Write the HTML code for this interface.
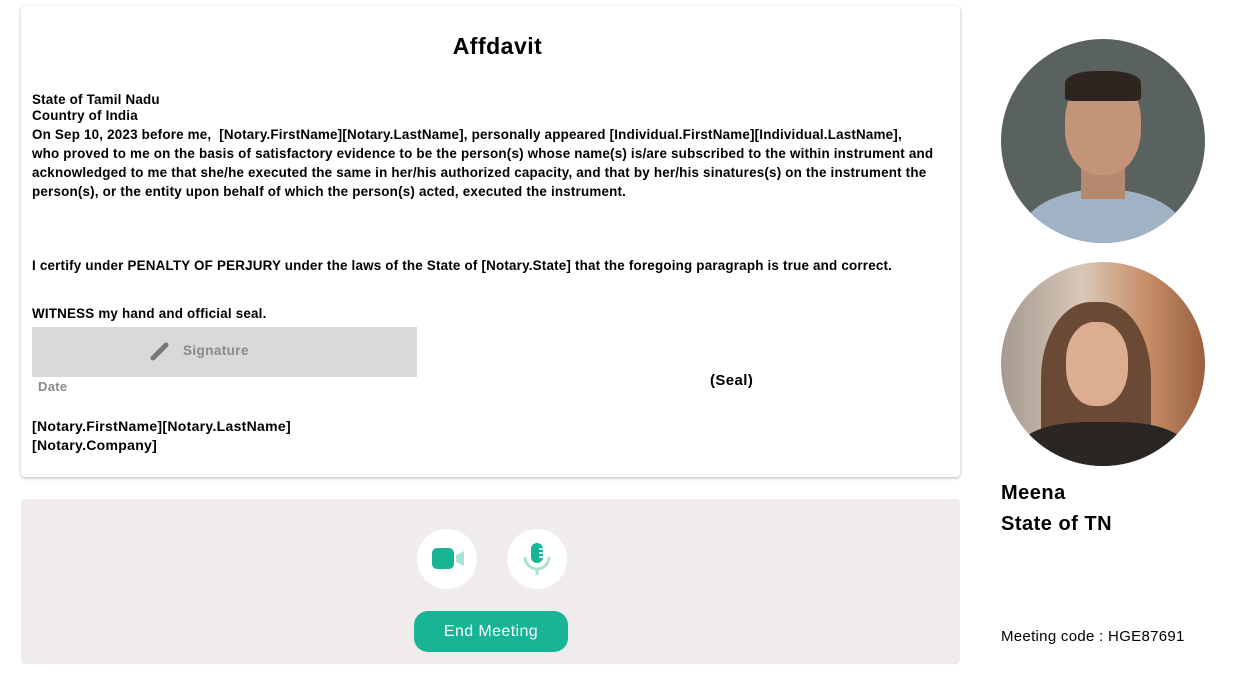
<!DOCTYPE html>
<html><head><meta charset="utf-8"><style>
*{margin:0;padding:0;box-sizing:border-box}
body{width:1255px;height:683px;background:#fff;font-family:"Liberation Sans",sans-serif;position:relative;overflow:hidden;color:#000}
.a{position:absolute;white-space:nowrap}
.card{position:absolute;left:21px;top:6px;width:939px;height:471px;background:#fff;border-radius:4px;box-shadow:0 1px 3px rgba(0,0,0,.3)}
.t{font-weight:bold;font-size:13.4px;left:32px;letter-spacing:0.2px}
.panel{position:absolute;left:21px;top:499px;width:939px;height:165px;background:#efeceb;border-radius:4px}
.c{position:absolute;width:60px;height:60px;border-radius:50%;background:#fff}
</style></head><body>
<div class="card"></div>
<div class="a" style="left:0;width:995px;text-align:center;top:33px;font-size:23px;font-weight:bold;letter-spacing:0.5px">Affdavit</div>
<div class="a t" style="top:92px">State of Tamil Nadu</div>
<div class="a t" style="top:108px">Country of India</div>
<div class="a t" style="top:127px">On Sep 10, 2023 before me,&nbsp; [Notary.FirstName][Notary.LastName], personally appeared [Individual.FirstName][Individual.LastName],</div>
<div class="a t" style="top:146px">who proved to me on the basis of satisfactory evidence to be the person(s) whose name(s) is/are subscribed to the within instrument and</div>
<div class="a t" style="top:165px">acknowledged to me that she/he executed the same in her/his authorized capacity, and that by her/his sinatures(s) on the instrument the</div>
<div class="a t" style="top:184px">person(s), or the entity upon behalf of which the person(s) acted, executed the instrument.</div>
<div class="a t" style="top:258px">I certify under PENALTY OF PERJURY under the laws of the State of [Notary.State] that the foregoing paragraph is true and correct.</div>
<div class="a t" style="top:306px">WITNESS my hand and official seal.</div>
<div class="a" style="left:32px;top:327px;width:385px;height:50px;background:#d9d9d9"></div>
<svg class="a" style="left:150px;top:341px" width="20" height="20" viewBox="0 0 20 20"><path d="M3 17 L9 11 M9 11 L16 4" stroke="#777" stroke-width="5" stroke-linecap="round"/></svg>
<div class="a" style="left:183px;top:343px;font-size:13.5px;font-weight:bold;color:#8a8a8a;letter-spacing:0.4px">Signature</div>
<div class="a" style="left:38px;top:379px;font-size:13px;font-weight:bold;color:#8a8a8a;letter-spacing:0.3px">Date</div>
<div class="a" style="left:710px;top:372px;font-size:15px;font-weight:bold;letter-spacing:0.4px">(Seal)</div>
<div class="a t" style="top:418px;font-size:14px;letter-spacing:0.3px">[Notary.FirstName][Notary.LastName]</div>
<div class="a t" style="top:437px;font-size:14px;letter-spacing:0.3px">[Notary.Company]</div>
<div class="panel"></div>
<div class="c" style="left:417px;top:529px"></div>
<div class="c" style="left:507px;top:529px"></div>
<svg class="a" style="left:431px;top:547px" width="34" height="24" viewBox="0 0 34 24"><rect x="1" y="1" width="22" height="21" rx="5" fill="#17b596"/><path d="M25 8 L33 4 L33 19 L25 15 Z" fill="#a9e3d6"/></svg>
<svg class="a" style="left:523px;top:542px" width="28" height="34" viewBox="0 0 28 34"><rect x="8" y="1" width="12" height="20" rx="6" fill="#17b596"/><path d="M16 7h4M16 11h4M16 15h4" stroke="#fff" stroke-width="1.5"/><path d="M2 15a12 12 0 0 0 24 0" fill="none" stroke="#a9e3d6" stroke-width="3"/><path d="M14 27v6" stroke="#a9e3d6" stroke-width="3"/></svg>
<div class="a" style="left:414px;top:611px;width:154px;height:41px;border-radius:14px;background:#17b596;color:#fff;text-align:center;line-height:41px;font-size:16px;letter-spacing:0.4px">End Meeting</div>
<div class="a" style="left:1001px;top:39px;width:204px;height:204px;border-radius:50%;overflow:hidden;background:#59625f">
  <div class="a" style="left:20px;top:150px;width:164px;height:90px;border-radius:50% 50% 0 0;background:#9fb3c4"></div>
  <div class="a" style="left:80px;top:120px;width:44px;height:40px;background:#b5896e"></div>
  <div class="a" style="left:64px;top:36px;width:76px;height:100px;border-radius:45%;background:#c39478"></div>
  <div class="a" style="left:64px;top:32px;width:76px;height:30px;border-radius:40% 40% 10% 10%;background:#2e2520"></div>
</div>
<div class="a" style="left:1001px;top:262px;width:204px;height:204px;border-radius:50%;overflow:hidden;background:linear-gradient(90deg,#a59a90,#d8c8b8 40%,#c8906a 70%,#9a6040)">
  <div class="a" style="left:40px;top:40px;width:110px;height:170px;border-radius:45% 45% 0 0;background:#6a4a35"></div>
  <div class="a" style="left:20px;top:160px;width:164px;height:60px;border-radius:40% 40% 0 0;background:#2a2624"></div>
  <div class="a" style="left:65px;top:60px;width:62px;height:84px;border-radius:45%;background:#dcad90"></div>
</div>
<div class="a" style="left:1001px;top:478px;font-size:20px;font-weight:bold;line-height:31px;letter-spacing:0.5px">Meena<br>State of TN</div>
<div class="a" style="left:1001px;top:628px;font-size:15px;letter-spacing:0.3px">Meeting code : HGE87691</div>
</body></html>
